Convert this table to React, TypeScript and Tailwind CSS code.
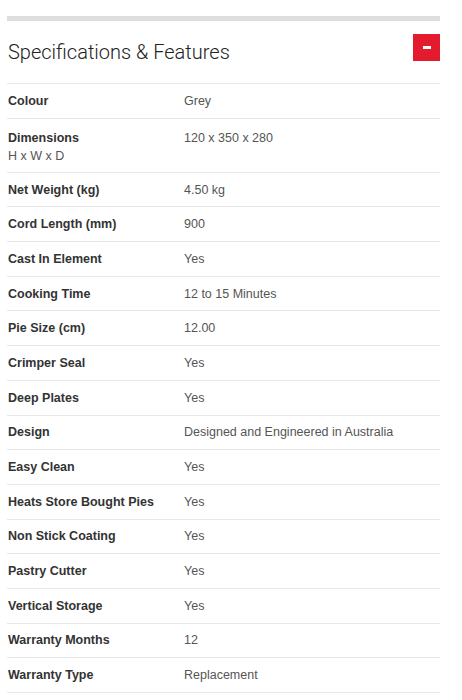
const specs: { label: string; sub?: string; value: string }[] = [
  { label: "Colour", value: "Grey" },
  { label: "Dimensions", sub: "H x W x D", value: "120 x 350 x 280" },
  { label: "Net Weight (kg)", value: "4.50 kg" },
  { label: "Cord Length (mm)", value: "900" },
  { label: "Cast In Element", value: "Yes" },
  { label: "Cooking Time", value: "12 to 15 Minutes" },
  { label: "Pie Size (cm)", value: "12.00" },
  { label: "Crimper Seal", value: "Yes" },
  { label: "Deep Plates", value: "Yes" },
  { label: "Design", value: "Designed and Engineered in Australia" },
  { label: "Easy Clean", value: "Yes" },
  { label: "Heats Store Bought Pies", value: "Yes" },
  { label: "Non Stick Coating", value: "Yes" },
  { label: "Pastry Cutter", value: "Yes" },
  { label: "Vertical Storage", value: "Yes" },
  { label: "Warranty Months", value: "12" },
  { label: "Warranty Type", value: "Replacement" },
]

export default function App() {
  return (
    <div className="w-[462px] h-[700px] overflow-hidden bg-white pl-[7px] pr-[22px] pt-4 font-['Liberation_Sans',Arial,sans-serif]">
      <div className="h-[5px] bg-[#dedede]" />
      <div className="flex items-start justify-between h-[62px]">
        <h2 className="pl-px pt-[17px] text-[20px] leading-[28px] font-light text-[#222] font-['Roboto',sans-serif]">
          Specifications &amp; Features
        </h2>
        <button className="mt-[13px] w-[27px] h-[27px] bg-[#e41b2f] flex items-center justify-center">
          <span className="block w-[8px] h-[3px] bg-white" />
        </button>
      </div>
      <div className="border-t border-[#e8e8e8]">
        {specs.map((s) => (
          <div
            key={s.label}
            className={`flex border-b border-[#e8e8e8] ${s.sub ? "h-[54px] pt-[10px]" : "h-[34.7px] items-center"}`}
          >
            <div className="w-[177px] pl-px text-[12.5px] leading-[18px] font-bold text-[#333]">
              {s.label}
              {s.sub && <div className="font-normal text-[#555]">{s.sub}</div>}
            </div>
            <div className="text-[12.5px] leading-[18px] text-[#555]">{s.value}</div>
          </div>
        ))}
      </div>
    </div>
  )
}
